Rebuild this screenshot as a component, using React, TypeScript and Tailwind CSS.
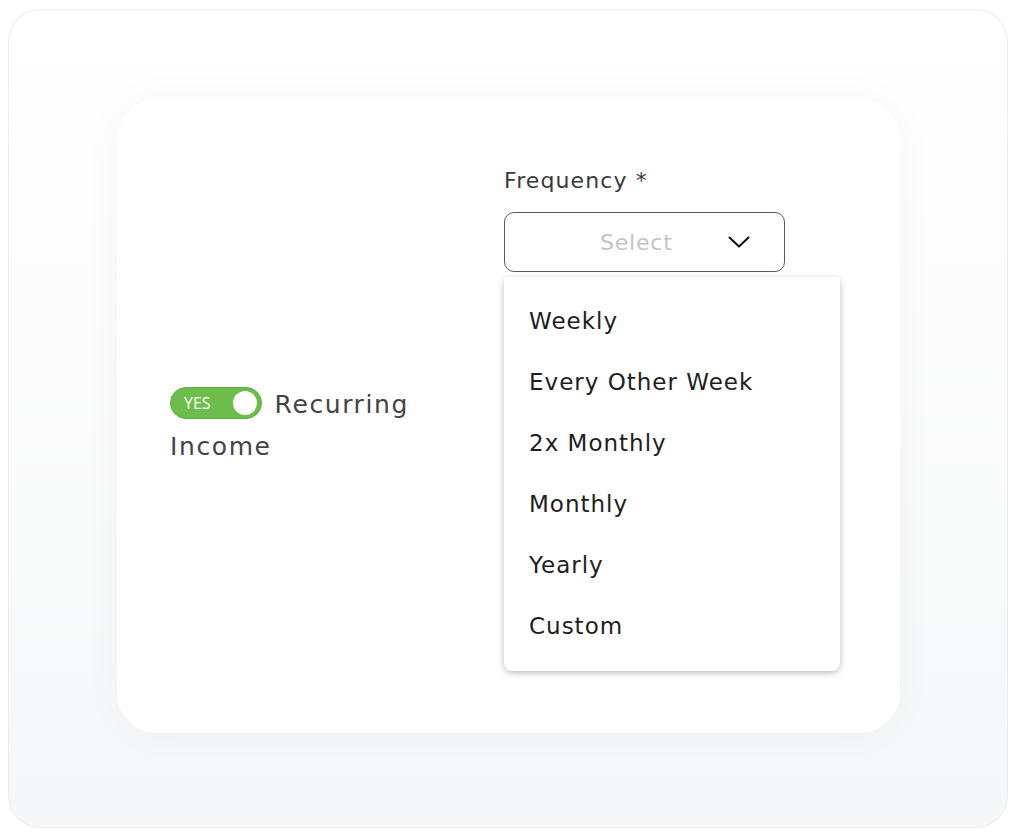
const OPTIONS = ["Weekly", "Every Other Week", "2x Monthly", "Monthly", "Yearly", "Custom"];

function Toggle() {
  return (
    <span className="relative -top-[3px] inline-flex h-[32px] w-[92px] items-center justify-between rounded-full border border-[#5fae42] bg-[#6cbd4c] pl-[13px] pr-[4px] align-middle tracking-normal">
      <span className="text-[16px] font-normal leading-none text-white" style={{ fontFamily: '"Open Sans", sans-serif' }}>
        YES
      </span>
      <span className="h-[24px] w-[24px] rounded-full bg-white" />
    </span>
  );
}

export default function App() {
  return (
    <div
      className="min-h-[835px] bg-white pl-[8px] pt-[9px]"
      style={{ fontFamily: '"DejaVu Sans", "Open Sans", sans-serif' }}
    >
      <div className="h-[819px] w-[1000px] rounded-[32px] border border-[#ececec] bg-gradient-to-b from-white to-[#f6f7f8] pl-[108px] pt-[90px]">
        <div className="flex h-[633px] w-[783px] rounded-[40px] bg-white pl-[53px] shadow-[0_0_40px_rgba(0,0,0,0.035)]">
          <div className="w-[334px] pt-[284px]">
            <p className="w-[270px] text-[25px] leading-[42px] tracking-[1.6px] text-[#444]">
              <Toggle /> <span className="ml-[3px]">Recurring</span> Income
            </p>
          </div>
          <div className="pt-[66px]">
            <label className="block text-[22px] leading-[30px] tracking-[1.1px] text-[#3a3a3a]">Frequency *</label>
            <button
              type="button"
              className="mt-[16px] flex h-[60px] w-[281px] items-center rounded-[10px] border-[1.5px] border-[#5a5a5a] bg-white pl-[95px] pr-[34px]"
            >
              <span className="flex-1 text-left text-[22px] tracking-[0.8px] text-[#c4c4c4]">Select</span>
              <svg width="22" height="12" viewBox="0 0 22 12" fill="none" aria-hidden>
                <path d="M1.5 1.5 L11 10.5 L20.5 1.5" stroke="#111" strokeWidth="2" strokeLinecap="round" strokeLinejoin="round" />
              </svg>
            </button>
            <ul className="mt-[5px] w-[336px] rounded-b-[8px] rounded-t-[4px] bg-white py-[14px] shadow-[0_2px_6px_rgba(0,0,0,0.25)]">
              {OPTIONS.map((o) => (
                <li key={o} className="flex h-[61px] items-center px-[25px] text-[23px] tracking-[1px] text-[#1e1e1e]">
                  {o}
                </li>
              ))}
            </ul>
          </div>
        </div>
      </div>
    </div>
  );
}
